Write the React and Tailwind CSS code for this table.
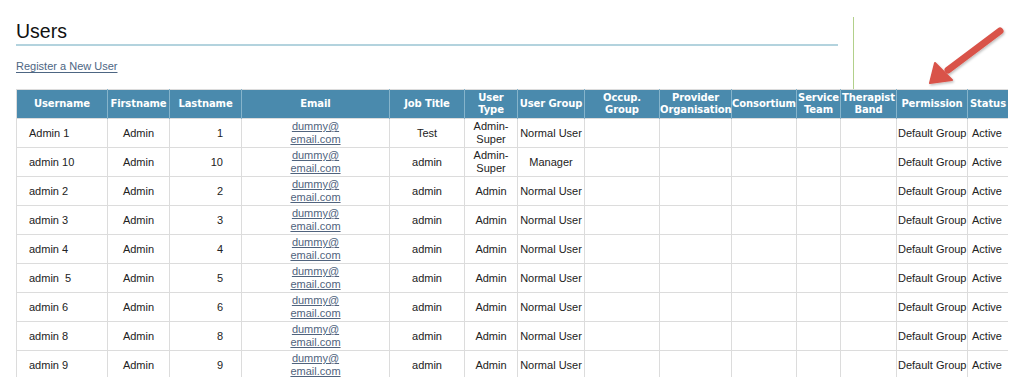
import React from 'react';

const COLS = [
  { label: ['Username'], w: 91, align: 'text-left pl-[12px]' },
  { label: ['Firstname'], w: 62, align: 'text-center' },
  { label: ['Lastname'], w: 72, align: 'text-right pr-[18px]' },
  { label: ['Email'], w: 148, align: 'text-center' },
  { label: ['Job Title'], w: 75, align: 'text-center' },
  { label: ['User', 'Type'], w: 53, align: 'text-center' },
  { label: ['User Group'], w: 67, align: 'text-center' },
  { label: ['Occup.', 'Group'], w: 75, align: 'text-center' },
  { label: ['Provider', 'Organisation'], w: 72, align: 'text-center' },
  { label: ['Consortium'], w: 65, align: 'text-center' },
  { label: ['Service', 'Team'], w: 44, align: 'text-center' },
  { label: ['Therapist', 'Band'], w: 56, align: 'text-center' },
  { label: ['Permission'], w: 71, align: 'text-left pl-[1px]' },
  { label: ['Status'], w: 41, align: 'text-left pl-[4px]' },
];

const USERS = [
  { user: 'Admin 1', last: '1', job: 'Test', type: ['Admin-', 'Super'], group: 'Normal User' },
  { user: 'admin 10', last: '10', job: 'admin', type: ['Admin-', 'Super'], group: 'Manager' },
  { user: 'admin 2', last: '2', job: 'admin', type: ['Admin'], group: 'Normal User' },
  { user: 'admin 3', last: '3', job: 'admin', type: ['Admin'], group: 'Normal User' },
  { user: 'admin 4', last: '4', job: 'admin', type: ['Admin'], group: 'Normal User' },
  { user: 'admin\u00a0 5', last: '5', job: 'admin', type: ['Admin'], group: 'Normal User' },
  { user: 'admin 6', last: '6', job: 'admin', type: ['Admin'], group: 'Normal User' },
  { user: 'admin 8', last: '8', job: 'admin', type: ['Admin'], group: 'Normal User' },
  { user: 'admin 9', last: '9', job: 'admin', type: ['Admin'], group: 'Normal User' },
];

export default function App() {
  const td = 'border border-[#dcdcdc] h-[29px] p-0 align-middle';
  return (
    <div className="relative w-[1024px] h-[388px] bg-white overflow-hidden text-[#222]"
      style={{ fontFamily: '"Liberation Sans", Arial, sans-serif' }}>
      <div className="pl-4 pt-[20px]">
        <h1 className="w-[822px] border-b-2 border-[#b3d3de] text-[19.5px] leading-[22px] pb-[2px] text-[#111] font-normal">
          Users
        </h1>
        <a href="#" className="inline-block mt-[14px] text-[11px] leading-[13px] text-[#4d6683] underline underline-offset-2">
          Register a New User
        </a>

        {/* Table */}
        <div className="mt-[12px] w-[992px] h-[288px] overflow-hidden">
          <table className="table-fixed border-collapse w-[992px] text-[11px] leading-[13px] text-[#222]">
            <colgroup>
              {COLS.map((c, i) => <col key={i} style={{ width: c.w }} />)}
            </colgroup>
            <thead>
              <tr className="bg-[#4a8aad] text-white">
                {COLS.map((c, i) => (
                  <th key={i}
                    className="h-[29px] p-0 border-t border-t-[#dcdcdc] border-x border-x-[#86b4cb] first:border-l-[#dcdcdc] last:border-r-[#dcdcdc] text-center align-middle font-bold text-[10px] leading-[12.5px] whitespace-nowrap tracking-[-0.1px]"
                    style={{ fontFamily: '"DejaVu Sans", Verdana, sans-serif' }}>
                    {c.label.map((l, j) => <div key={j}>{l}</div>)}
                  </th>
                ))}
              </tr>
            </thead>
            <tbody>
              {USERS.map((u, i) => (
                <tr key={i}>
                  <td className={`${td} ${COLS[0].align} whitespace-pre`}>{u.user}</td>
                  <td className={`${td} text-center`}>Admin</td>
                  <td className={`${td} ${COLS[2].align}`}>{u.last}</td>
                  <td className={`${td} text-center`}>
                    <a href="#" className="text-[#50637d] underline leading-[13px]">dummy@<br />email.com</a>
                  </td>
                  <td className={`${td} text-center`}>{u.job}</td>
                  <td className={`${td} text-center`}>{u.type.map((t, j) => <div key={j}>{t}</div>)}</td>
                  <td className={`${td} text-center whitespace-nowrap`}>{u.group}</td>
                  <td className={td}></td>
                  <td className={td}></td>
                  <td className={td}></td>
                  <td className={td}></td>
                  <td className={td}></td>
                  <td className={`${td} ${COLS[12].align} whitespace-nowrap`}>Default Group</td>
                  <td className={`${td} ${COLS[13].align}`}>Active</td>
                </tr>
              ))}
            </tbody>
          </table>
        </div>
      </div>

      {/* green divider */}
      <div className="absolute left-[853px] top-[17px] w-px h-[72px] bg-[#b2d08a]" />

      {/* red annotation arrow */}
      <svg className="absolute left-[920px] top-[22px]" width="90" height="70" viewBox="0 0 90 70">
        <defs>
          <filter id="sh" x="-20%" y="-20%" width="140%" height="140%">
            <feDropShadow dx="1" dy="1.5" stdDeviation="1.2" floodColor="#000" floodOpacity="0.25" />
          </filter>
        </defs>
        <g filter="url(#sh)">
          <line x1="80" y1="9" x2="28" y2="48" stroke="#d9534a" strokeWidth="7" strokeLinecap="round" />
          <polygon points="10,61 15,41 32,58" fill="#d9534a" stroke="#d9534a" strokeWidth="2" strokeLinejoin="round" />
        </g>
      </svg>
    </div>
  );
}
